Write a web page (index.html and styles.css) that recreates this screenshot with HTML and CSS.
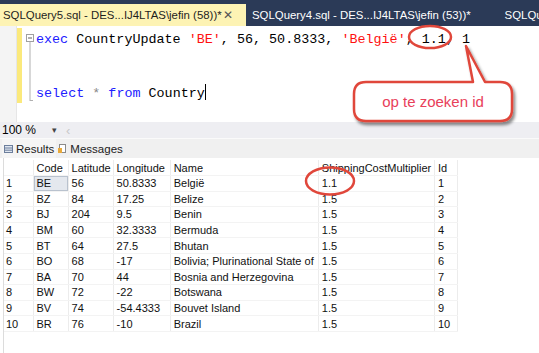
FILE: index.html
```html
<!DOCTYPE html>
<html lang="nl">
<head>
<meta charset="UTF-8">
<title>SQLQuery5.sql</title>
<link rel="stylesheet" href="styles.css">
</head>
<body>
<div class="page">
  <div class="tabwell">
    <div class="tab active">SQLQuery5.sql - DES...IJ4LTAS\jefin (58))*<span class="close">&#x2715;</span></div>
    <div class="tab">SQLQuery4.sql - DES...IJ4LTAS\jefin (53))*</div>
    <div class="tab last">SQLQue</div>
  </div>

  <div class="editor">
    <div class="margin"></div>
    <div class="changes"></div>
    <svg class="outline" width="13" height="96" viewBox="0 0 13 96">
      <rect x="4.5" y="8.5" width="7" height="7" fill="#fff" stroke="#a0a0a0"/>
      <line x1="6" y1="12" x2="10" y2="12" stroke="#606060"/>
      <line x1="8" y1="16" x2="8" y2="75" stroke="#b0b0b0"/>
      <line x1="8" y1="74.5" x2="11" y2="74.5" stroke="#b0b0b0"/>
    </svg>
    <div class="code">
      <div class="line"><span class="kw">exec</span> CountryUpdate <span class="str">'BE'</span>, 56, 50.8333, <span class="str">'België'</span>, 1.1, 1</div>
      <div class="line"></div>
      <div class="line"><span class="kw">select</span> <span class="op">*</span> <span class="kw">from</span> Country<span class="caret"></span></div>
    </div>
  </div>

  <div class="zoombar">
    <span class="zoom">100 %</span>
    <span class="arrow">&#9662;</span>
    <span class="scroll">&lsaquo;</span>
  </div>

  <div class="restabs">
    <div class="rtab active">
      <svg width="9" height="8" viewBox="0 0 9 8"><rect x="0.5" y="0.5" width="8" height="7" fill="#dfe6f0" stroke="#6d7f9c"/><line x1="0.5" y1="3" x2="8.5" y2="3" stroke="#6d7f9c"/><line x1="0.5" y1="5.2" x2="8.5" y2="5.2" stroke="#6d7f9c"/></svg>
      Results
    </div>
    <div class="rtab">
      <svg width="9" height="9" viewBox="0 0 9 9"><rect x="1.5" y="0.5" width="6" height="8" fill="#fff" stroke="#8a8a8a"/><rect x="0" y="4" width="4" height="5" fill="#e9a93a"/></svg>
      Messages
    </div>
  </div>

  <div class="grid">
    <table>
      <colgroup>
        <col class="c-num"><col class="c-code"><col class="c-lat"><col class="c-lon"><col class="c-name"><col class="c-mult"><col class="c-id">
      </colgroup>
      <tr class="head"><th></th><th>Code</th><th>Latitude</th><th>Longitude</th><th>Name</th><th>ShippingCostMultiplier</th><th>Id</th></tr>
      <tr><td>1</td><td class="sel">BE</td><td>56</td><td>50.8333</td><td>België</td><td>1.1</td><td>1</td></tr>
      <tr><td>2</td><td>BZ</td><td>84</td><td>17.25</td><td>Belize</td><td>1.5</td><td>2</td></tr>
      <tr><td>3</td><td>BJ</td><td>204</td><td>9.5</td><td>Benin</td><td>1.5</td><td>3</td></tr>
      <tr><td>4</td><td>BM</td><td>60</td><td>32.3333</td><td>Bermuda</td><td>1.5</td><td>4</td></tr>
      <tr><td>5</td><td>BT</td><td>64</td><td>27.5</td><td>Bhutan</td><td>1.5</td><td>5</td></tr>
      <tr><td>6</td><td>BO</td><td>68</td><td>-17</td><td>Bolivia; Plurinational State of</td><td>1.5</td><td>6</td></tr>
      <tr><td>7</td><td>BA</td><td>70</td><td>44</td><td>Bosnia and Herzegovina</td><td>1.5</td><td>7</td></tr>
      <tr><td>8</td><td>BW</td><td>72</td><td>-22</td><td>Botswana</td><td>1.5</td><td>8</td></tr>
      <tr><td>9</td><td>BV</td><td>74</td><td>-54.4333</td><td>Bouvet Island</td><td>1.5</td><td>9</td></tr>
      <tr><td>10</td><td>BR</td><td>76</td><td>-10</td><td>Brazil</td><td>1.5</td><td>10</td></tr>
    </table>
  </div>

  <!-- annotations drawn over the screenshot -->
  <svg class="marks" width="539" height="353" viewBox="0 0 539 353">
    <defs>
      <filter id="shadow" x="-10%" y="-10%" width="130%" height="140%">
        <feDropShadow dx="2" dy="3" stdDeviation="1.5" flood-color="#000" flood-opacity="0.45"/>
      </filter>
    </defs>
    <ellipse cx="430" cy="37" rx="21" ry="11" fill="none" stroke="#e0473b" stroke-width="2.5"/>
    <ellipse cx="330" cy="181" rx="24" ry="13.5" fill="none" stroke="#e0473b" stroke-width="2.5"/>
    <path d="M366 82 L473 82 L466 46 L485 82 L500 82 Q512 82 512 94 L512 109 Q512 121 500 121 L366 121 Q354 121 354 109 L354 94 Q354 82 366 82 Z"
          fill="#fff" stroke="#e0473b" stroke-width="2.5" stroke-linejoin="round" filter="url(#shadow)"/>
  </svg>
  <div class="callout-text">op te zoeken id</div>
</div>
</body>
</html>
```

FILE: styles.css
```css
body {
  margin: 0;
  padding: 0;
  background-color: #fff;
  font-family: 'Liberation Sans', Arial, sans-serif;
  color: #000;
}

.page {
  position: relative;
  width: 539px;
  height: 353px;
  overflow: hidden;
}

/* document tabs */
.tabwell {
  display: flex;
  height: 26px;
  padding-top: 4px;
  box-sizing: border-box;
  background-color: #2b3a57;
  overflow: hidden;
}

.tab {
  flex: none;
  display: flex;
  align-items: center;
  padding: 0 6px 0 6px;
  font-size: 11.4px;
  color: #fff;
  white-space: nowrap;
}

.tab.active {
  width: 246px;
  box-sizing: border-box;
  background-color: #fdf3b4;
  color: #1e1e1e;
  padding-left: 3px;
}

.tab.active .close {
  margin-left: auto;
  margin-right: 7px;
  font-size: 12px;
  color: #555;
}

.tab.last {
  margin-left: 22px;
}

/* editor */
.editor {
  display: flex;
  height: 96px;
  background-color: #fff;
}

.margin {
  width: 16px;
  background-color: #f4f4f4;
  border-right: 1px solid #e6e6e6;
}

.changes {
  width: 5px;
  height: 75px;
  margin-top: 2px;
  background-color: #fbe97c;
}

.outline {
  flex: none;
}

.code {
  padding-left: 1px;
  font-family: 'Liberation Mono', 'DejaVu Sans Mono', monospace;
  font-size: 13.4px;
  color: #000;
}

.line {
  height: 27px;
  line-height: 27px;
  white-space: pre;
}

.kw {
  color: #2020ff;
}

.str {
  color: #ff1010;
}

.op {
  color: #888;
}

.caret {
  display: inline-block;
  width: 1px;
  height: 16px;
  vertical-align: -3px;
  background-color: #000;
}

/* zoom strip */
.zoombar {
  display: flex;
  align-items: center;
  height: 16px;
  padding-left: 2px;
  background-color: #eeeef2;
  font-size: 12px;
}

.zoombar .arrow {
  margin-left: 16px;
  font-size: 9px;
  color: #444;
}

.zoombar .scroll {
  margin-left: 9px;
  color: #c8c8c8;
  font-size: 13px;
}

/* results / messages tabs */
.restabs {
  display: flex;
  height: 20px;
  padding: 0 0 0 2px;
  box-sizing: border-box;
  background-color: #f0f0f0;
  border-top: 1px solid #fafafa;
}

.rtab {
  display: flex;
  align-items: center;
  gap: 3px;
  padding: 0 2px 0 2px;
  font-size: 11.5px;
  color: #222;
}

.rtab.active {
  background-color: #f5f5f5;
}

/* result grid */
.grid {
  height: 197px;
  margin-left: 3px;
  padding-top: 2px;
  border-left: 1px solid #dcdcdc;
  background-color: #fff;
}

table {
  border-collapse: collapse;
  table-layout: fixed;
  width: 454px;
  font-size: 11px;
  color: #111;
}

.c-num { width: 29px; }
.c-code { width: 35px; }
.c-lat { width: 45px; }
.c-lon { width: 57px; }
.c-name { width: 148px; }
.c-mult { width: 116px; }
.c-id { width: 23px; }

th, td {
  height: 14.6px;
  padding: 0 0 0 3px;
  border-right: 1px solid #ececec;
  border-bottom: 1px solid #f3f3f3;
  text-align: left;
  font-weight: normal;
  white-space: nowrap;
  overflow: hidden;
}

td:first-child, th:first-child {
  padding-left: 2px;
}

.head th {
  height: 15px;
}

td.sel {
  background-color: #e4e8ee;
  box-shadow: inset 0 0 0 1px #b9c2ce;
}

/* annotations */
.marks {
  position: absolute;
  left: 0;
  top: 0;
  pointer-events: none;
}

.callout-text {
  position: absolute;
  left: 354px;
  top: 82px;
  width: 158px;
  height: 39px;
  display: flex;
  align-items: center;
  justify-content: center;
  font-size: 15px;
  color: #e8405a;
}
```
